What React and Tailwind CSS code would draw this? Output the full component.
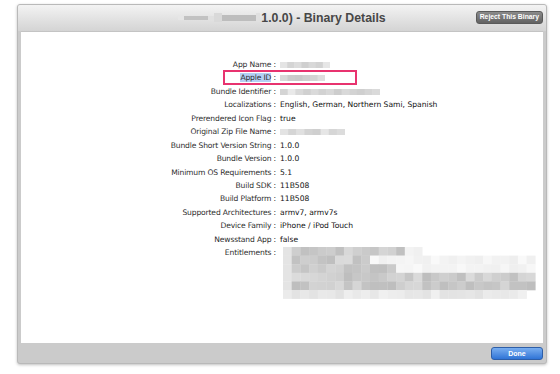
import React from "react";

const font = { fontFamily: '"DejaVu Sans", "Liberation Sans", sans-serif' };

function Blur({ w, shades }) {
  const n = shades.length;
  const cw = w / n;
  return (
    <svg width={w} height="8" className="inline-block align-middle">
      {shades.map((s, i) => (
        <rect key={i} x={i * cw} y="1" width={cw + 0.5} height="6" fill={s} />
      ))}
    </svg>
  );
}

const rows = [
  ["App Name", { blur: [50, ["#e4e4e4", "#d4d4d4", "#dcdcdc", "#cfcfcf", "#d8d8d8", "#d2d2d2", "#e6e6e6"]] }],
  ["Apple ID", { blur: [45, ["#d8d8d8", "#cbcbcb", "#c9c9c9", "#cfcfcf", "#d3d3d3", "#dedede"]] }],
  ["Bundle Identifier", { blur: [100, ["#d4d4d4", "#e9e9e9", "#d9d9d9", "#d0d0d0", "#dadada", "#d2d2d2", "#d8d8d8", "#cdcdcd", "#d9d9d9", "#d3d3d3", "#cfcfcf", "#d5d5d5", "#dadada"]] }],
  ["Localizations", "English, German, Northern Sami, Spanish"],
  ["Prerendered Icon Flag", "true"],
  ["Original Zip File Name", { blur: [65, ["#e3e3e3", "#d5d5d5", "#e0e0e0", "#d3d3d3", "#cfcfcf", "#e6e6e6", "#d6d6d6", "#dcdcdc"]] }],
  ["Bundle Short Version String", "1.0.0"],
  ["Bundle Version", "1.0.0"],
  ["Minimum OS Requirements", "5.1"],
  ["Build SDK", "11B508"],
  ["Build Platform", "11B508"],
  ["Supported Architectures", "armv7, armv7s"],
  ["Device Family", "iPhone / iPod Touch"],
  ["Newsstand App", "false"],
];

function Mosaic() {
  const cw = 8.7;
  const ch = 8.6;
  const lens = [14, 10, 13, 29, 29, 27];
  const tails = [16, 29, 29, 29, 29, 28];
  const cells = [];
  let seed = 7;
  const rnd = () => {
    seed = (seed * 9301 + 49297) % 233280;
    return seed / 233280;
  };
  for (let r = 0; r < 6; r++) {
    for (let c = 0; c < tails[r]; c++) {
      let v;
      if (r === 5) v = 226 + Math.floor(rnd() * 16);
      else if (c < lens[r]) v = 190 + Math.floor(rnd() * 30);
      else v = 238 + Math.floor(rnd() * 12);
      if (c === 0) v = Math.max(v, 228);
      cells.push(
        <rect key={r + "-" + c} x={c * cw} y={r * ch} width={cw + 0.3} height={ch + 0.3} fill={`rgb(${v},${v},${v})`} />
      );
    }
  }
  return (
    <svg width="256" height="52" className="block">
      {cells}
    </svg>
  );
}

export default function App() {
  return (
    <div className="w-[560px] h-[374px] bg-white overflow-hidden" style={font}>
      <div className="ml-[17px] mt-[4px] w-[530px] h-[360px] rounded-[3px] border border-[#b9b9b9] bg-[#cbcbcb] shadow-[0_1px_3px_rgba(0,0,0,0.25)] flex flex-col overflow-hidden">
        <div className="h-[26px] shrink-0 bg-gradient-to-b from-[#f3f3f3] to-[#d4d4d4] relative flex items-center justify-center">
          <div className="flex items-center" style={{ fontFamily: '"Liberation Sans", Arial, sans-serif' }}>
            <svg width="82" height="10" className="mr-[1px]">
              <rect x="0" y="3" width="6" height="4" fill="#e6e6e6" />
              <rect x="6" y="3" width="24" height="4" fill="#c2c2c2" />
              <rect x="30" y="3" width="6" height="4" fill="#e0e0e0" />
              <rect x="36" y="0" width="8" height="9" fill="#d9d9d9" />
              <rect x="44" y="2" width="34" height="6" fill="#bdbdbd" />
              <rect x="78" y="0" width="4" height="9" fill="#e0e0e0" />
            </svg>
            <span className="text-[12.3px] font-bold text-[#474747] leading-none">1.0.0) - Binary Details</span>
          </div>
          <div
            className="absolute right-[3px] top-[6px] h-[13px] px-[3px] rounded-[3px] bg-gradient-to-b from-[#8a8a8a] to-[#636363] border border-[#5a5a5a] text-white text-[6.8px] font-bold flex items-center leading-none"
            style={{ fontFamily: '"Liberation Sans", Arial, sans-serif' }}
          >
            Reject This Binary
          </div>
        </div>
        <div className="mx-[3px] h-[312px] bg-white border-t border-[#c4c4c4] relative pt-[26px]">
          <div className="flex flex-col">
            {rows.map(([label, val]) => (
              <div key={label} className="flex items-center h-[13.45px] text-[7.6px]">
                <div className="w-[255px] shrink-0 text-right text-[#2e2e2e] whitespace-nowrap tracking-[-0.15px]">
                  {label === "Apple ID" ? <span className="bg-[#b4d0f5]">Apple ID</span> : label} :
                </div>
                <div className="pl-[4px] whitespace-nowrap text-[#111]">
                  {typeof val === "string" ? val : <Blur w={val.blur[0]} shades={val.blur[1]} />}
                </div>
              </div>
            ))}
            <div className="flex items-start text-[7.6px]">
              <div className="w-[255px] shrink-0 text-right text-[#2e2e2e] h-[13.45px] flex items-center justify-end tracking-[-0.15px]">Entitlements :</div>
              <div className="pl-[7px] pt-[1px]">
                <Mosaic />
              </div>
            </div>
          </div>
          <div className="absolute left-[202px] top-[38px] w-[134px] h-[15px] border-2 border-[#e8336f]" />
        </div>
        <div className="flex-1 flex items-center justify-end pr-[3px]">
          <div
            className="w-[52px] h-[13px] rounded-[3px] border border-[#2d5ea8] bg-gradient-to-b from-[#79aef0] to-[#2f74d6] text-white text-[7px] font-bold flex items-center justify-center leading-none"
            style={{ fontFamily: '"Liberation Sans", Arial, sans-serif' }}
          >
            Done
          </div>
        </div>
      </div>
    </div>
  );
}
